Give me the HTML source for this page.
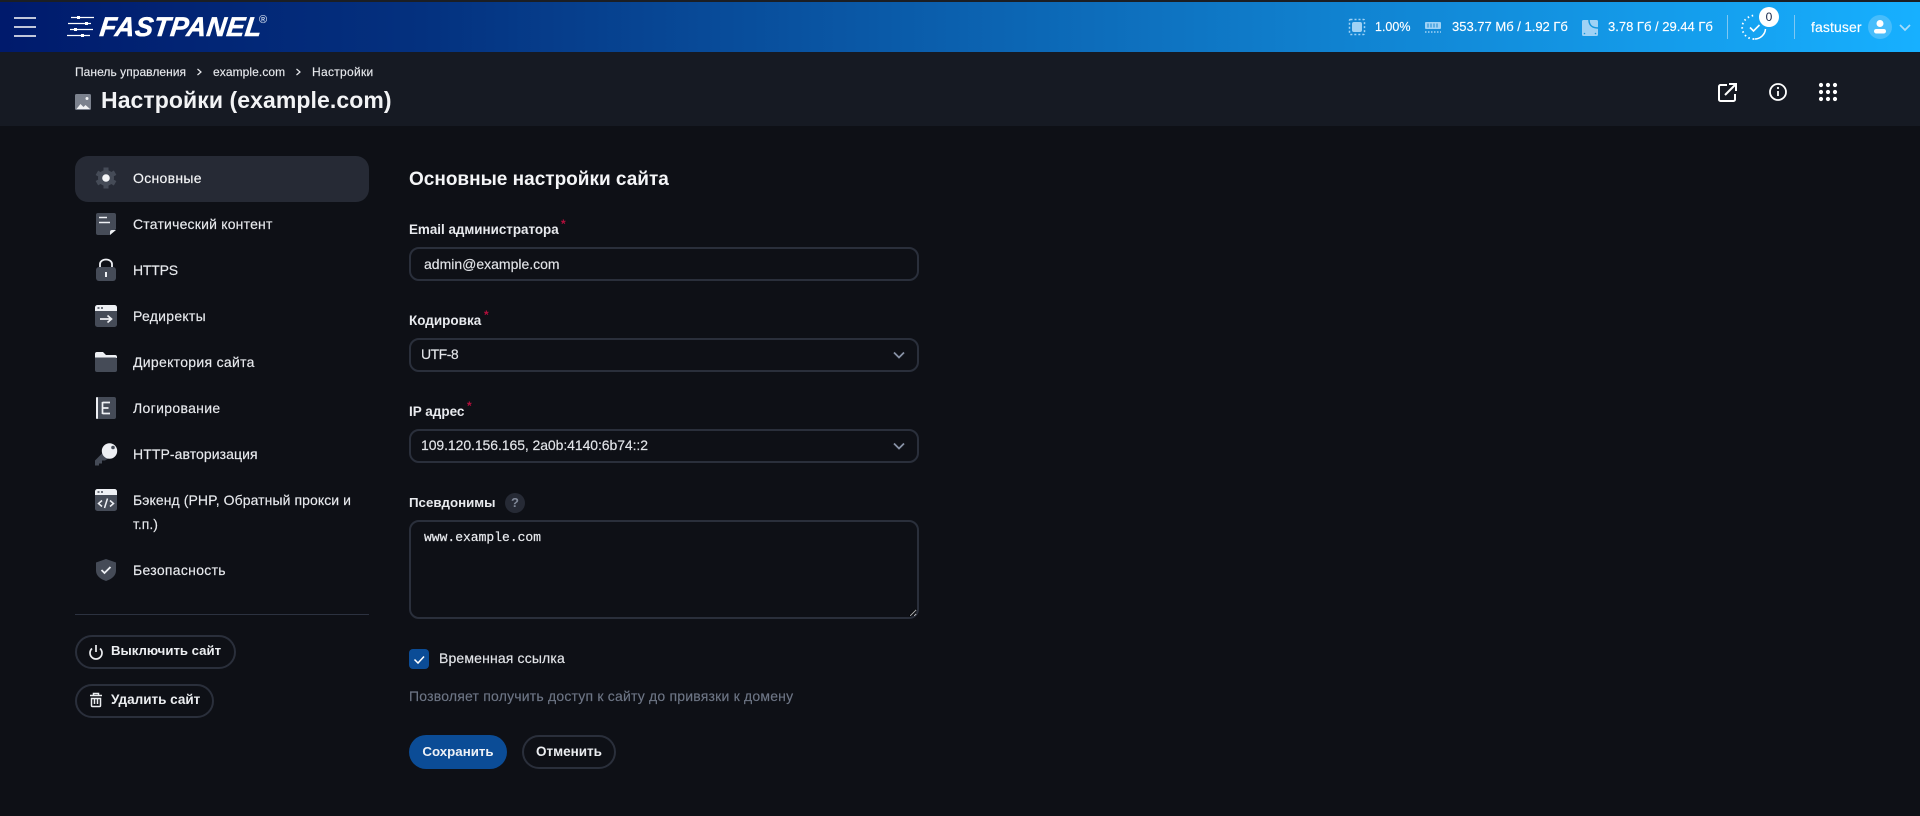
<!DOCTYPE html>
<html lang="ru"><head><meta charset="utf-8"><title>Настройки (example.com)</title>
<style>
html,body{margin:0;padding:0;width:1920px;height:816px;overflow:hidden;background:#0e1016;font-family:"Liberation Sans","Noto Sans CJK SC",sans-serif;color:#e8eaee}
*{box-sizing:border-box}
.a{position:absolute}
.t{position:absolute;white-space:nowrap;line-height:20px;font-size:14px;-webkit-text-stroke:.15px currentColor}
.b{font-weight:700;-webkit-text-stroke:0}
.box{position:absolute;border:2px solid #2a2f3b;border-radius:10px;background:#0e1016}
.pill{position:absolute;border:2px solid #2a2f3b;border-radius:18px;height:34px}
.star{position:absolute;color:#b40f3c;font-size:12px;line-height:12px;font-weight:700}
textarea{position:absolute;left:409px;top:520px;width:510px;height:99px;background:#0e1016;border:2px solid #2a2f3b;border-radius:10px;color:#e8eaee;font:13px/16px "Liberation Mono",monospace;padding:8px 13px;margin:0;outline:none;resize:both;-webkit-text-stroke:.2px currentColor}
</style></head><body>
<div class="a" style="left:0;top:0;width:1920px;height:52px;background:linear-gradient(90deg,#001a6c 0%,#04317f 22%,#1081cf 69%,#17b0ff 100%)"></div>
<div class="a" style="left:0;top:0;width:1920px;height:2px;background:#1b1e24"></div>
<div class="a" style="left:0;top:52px;width:1920px;height:74px;background:#161a23"></div>

<div class="t b" style="left:100px;top:12px;font-size:27px;line-height:30px;font-style:italic;color:#fff;letter-spacing:.4px;transform:skewX(-7deg);-webkit-text-stroke:.5px #fff">FASTPANEL</div>
<div class="t" style="left:259px;top:14px;font-size:11px;line-height:12px;color:#c8d4e8">®</div>

<div class="t" style="left:75px;top:62px;font-size:12px;color:#e6e8ec;letter-spacing:.05px">Панель управления</div>
<div class="t" style="left:213px;top:62px;font-size:12px;color:#e6e8ec;letter-spacing:.08px">example.com</div>
<div class="t" style="left:312px;top:62px;font-size:12px;color:#e6e8ec;letter-spacing:.3px">Настройки</div>
<div class="t b" style="left:101px;top:88px;font-size:23px;line-height:24px;color:#f2f3f5;letter-spacing:.08px">Настройки (example.com)</div>

<div class="t" style="left:1375px;top:17px;font-size:12.500px;color:#fff">1.00%</div>
<div class="t" style="left:1452px;top:17px;font-size:13px;color:#fff">353.77 Мб / 1.92 Гб</div>
<div class="t" style="left:1608px;top:17px;font-size:13px;color:#fff">3.78 Гб / 29.44 Гб</div>
<div class="t" style="left:1811px;top:17px;font-size:14px;color:#fff;letter-spacing:.1px">fastuser</div>

<div class="a" style="left:75px;top:156px;width:294px;height:46px;border-radius:13px;background:#262a35"></div>
<div class="t" style="left:133px;top:168px;color:#f4f5f7;letter-spacing:.3px">Основные</div>
<div class="t" style="left:133px;top:214px;letter-spacing:.2px">Статический контент</div>
<div class="t" style="left:133px;top:260px;letter-spacing:-.2px">HTTPS</div>
<div class="t" style="left:133px;top:306px;letter-spacing:.27px">Редиректы</div>
<div class="t" style="left:133px;top:352px;letter-spacing:.3px">Директория сайта</div>
<div class="t" style="left:133px;top:398px;letter-spacing:.33px">Логирование</div>
<div class="t" style="left:133px;top:444px;letter-spacing:.08px">HTTP-авторизация</div>
<div class="t" style="left:133px;top:490px;letter-spacing:.08px">Бэкенд (PHP, Обратный прокси и</div>
<div class="t" style="left:133px;top:514px">т.п.)</div>
<div class="t" style="left:133px;top:560px;letter-spacing:.3px">Безопасность</div>
<div class="a" style="left:75px;top:614px;width:294px;height:1px;background:#2c3240"></div>

<div class="pill" style="left:75px;top:635px;width:161px"></div>
<div class="t b" style="left:111px;top:641px;font-size:13.200px;color:#eceef1">Выключить сайт</div>
<div class="pill" style="left:75px;top:684px;width:139px"></div>
<div class="t b" style="left:111px;top:690px;font-size:13.500px;color:#eceef1">Удалить сайт</div>

<div class="t b" style="left:409px;top:170px;font-size:19px;color:#f4f5f7">Основные настройки сайта</div>

<div class="t b" style="left:409px;top:220px;font-size:13.400px">Email администратора</div>
<div class="star" style="left:561px;top:218px">*</div>
<div class="box" style="left:409px;top:247px;width:510px;height:34px"></div>
<div class="t" style="left:424px;top:254px;color:#e2e4e8">admin@example.com</div>

<div class="t b" style="left:409px;top:311px;font-size:13.500px">Кодировка</div>
<div class="star" style="left:484px;top:309px">*</div>
<div class="box" style="left:409px;top:338px;width:510px;height:34px"></div>
<div class="t" style="left:421px;top:344px;color:#e2e4e8;letter-spacing:-.5px">UTF-8</div>

<div class="t b" style="left:409px;top:402px;font-size:13.500px">IP адрес</div>
<div class="star" style="left:467px;top:400px">*</div>
<div class="box" style="left:409px;top:429px;width:510px;height:34px"></div>
<div class="t" style="left:421px;top:435px;color:#e2e4e8;letter-spacing:-.08px">109.120.156.165, 2a0b:4140:6b74::2</div>

<div class="t b" style="left:409px;top:493px;font-size:13.300px">Псевдонимы</div>
<div class="a" style="left:505px;top:493px;width:20px;height:20px;border-radius:50%;background:#262a35"></div>
<div class="t b" style="left:505px;top:493px;width:20px;text-align:center;font-size:13px;color:#808898">?</div>
<textarea spellcheck="false">www.example.com</textarea>

<div class="a" style="left:409px;top:649px;width:20px;height:20px;border-radius:4px;background:#0b4c96"></div>
<div class="t" style="left:439px;top:648px;color:#e2e4e8;letter-spacing:.15px">Временная ссылка</div>
<div class="t" style="left:409px;top:686px;color:#6d7585;letter-spacing:.2px">Позволяет получить доступ к сайту до привязки к домену</div>

<div class="a" style="left:409px;top:735px;width:98px;height:34px;border-radius:17px;background:#0b4c96"></div>
<div class="t b" style="left:409px;top:742px;width:98px;text-align:center;font-size:13.300px;color:#eef1f6">Сохранить</div>
<div class="pill" style="left:522px;top:735px;width:94px"></div>
<div class="t b" style="left:522px;top:742px;width:94px;text-align:center;font-size:13.500px;color:#eceef1">Отменить</div>

<svg class="a" style="left:0;top:0" width="1920" height="816" viewBox="0 0 1920 816" fill="none">
<!-- hamburger -->
<path d="M14 18h22M14 27h22M14 36h22" stroke="#fff" stroke-width="1.600"/>
<!-- logo sliders -->
<path d="M71 17.500h23M68 23.500h23M70 29.500h23M67 35.500h23" stroke="#fff" stroke-width="1.300"/>
<path d="M77 16h3v3h-3zM85 22h3v3h-3zM74 28h3v3h-3zM81 34h3v3h-3z" fill="#fff"/>
<!-- breadcrumb chevrons -->
<path d="M197.500 69l3.500 3-3.500 3M296.500 69l3.500 3-3.500 3" stroke="#e6e8ec" stroke-width="1.200"/>
<!-- title image icon -->
<rect x="75" y="94" width="16" height="16" rx="1.500" fill="#7b818d"/>
<path d="M76.500 109l4-5 3 3 2-2 4.500 4z" fill="#f0f1f3"/><circle cx="87" cy="98.500" r="1.500" fill="#f0f1f3"/>
<!-- chip -->
<rect x="1352" y="22" width="10" height="10" rx="2" fill="#9fd2f5"/>
<rect x="1349.500" y="19.500" width="15" height="15" rx="1" stroke="#9fd2f5" stroke-width="1.500" stroke-dasharray="2 2"/>
<!-- ram -->
<rect x="1425" y="22" width="16" height="7" rx="1" fill="#9fd2f5"/>
<path d="M1428 23.500v4M1431 23.500v4M1434 23.500v4M1437 23.500v4" stroke="#1488d4" stroke-width="1"/>
<path d="M1425 32h16" stroke="#9fd2f5" stroke-width="1.400" stroke-dasharray="1.500 1.500"/>
<!-- disk -->
<rect x="1582" y="20" width="16" height="16" rx="1.500" fill="#9fd2f5"/>
<path d="M1589 20c0 5 3 8 9 8" stroke="#1596dd" stroke-width="1.500"/>
<circle cx="1584.500" cy="33.500" r=".8" fill="#1596dd"/><circle cx="1595.500" cy="33.500" r=".8" fill="#1596dd"/>
<!-- dividers -->
<path d="M1727.500 15v24M1794.500 15v24" stroke="#7fc8f3" stroke-width="1"/>
<!-- tasks -->
<path d="M1765.500 29a11 11 0 0 1-11 10" stroke="#fff" stroke-width="1.500"/>
<path d="M1754 39a11.500 11.500 0 0 1-5-22 11 11 0 0 1 5-1.500" stroke="#fff" stroke-width="1.800" stroke-dasharray="1.500 2.800"/>
<path d="M1750 27.500l3.500 3.500 6-6" stroke="#fff" stroke-width="1.600"/>
<circle cx="1769" cy="17" r="10" fill="#fff"/>
<text x="1769" y="21" text-anchor="middle" font-family="Liberation Sans" font-size="12" fill="#16264a">0</text>
<!-- avatar -->
<circle cx="1880" cy="27" r="12" fill="#47bdfb"/>
<circle cx="1880" cy="23.500" r="3.500" fill="#fff"/><rect x="1874" y="29" width="12" height="4.500" rx="2.200" fill="#fff"/>
<path d="M1900 25l5 5 5-5" stroke="#a8dcfa" stroke-width="1.700"/>
<!-- header action icons -->
<path d="M1727 85h-6.500a1.500 1.500 0 0 0-1.500 1.500v13a1.500 1.500 0 0 0 1.500 1.500h13a1.500 1.500 0 0 0 1.500-1.500V94" stroke="#fff" stroke-width="2"/>
<path d="M1725 95l11-11M1729 84h7v7" stroke="#fff" stroke-width="2"/>
<circle cx="1778" cy="92" r="8" stroke="#fff" stroke-width="1.800"/>
<path d="M1778 91v5" stroke="#fff" stroke-width="1.800"/><circle cx="1778" cy="88" r="1.100" fill="#fff"/>
<g fill="#fff"><circle cx="1821" cy="85" r="2.100"/><circle cx="1828" cy="85" r="2.100"/><circle cx="1835" cy="85" r="2.100"/><circle cx="1821" cy="92" r="2.100"/><circle cx="1828" cy="92" r="2.100"/><circle cx="1835" cy="92" r="2.100"/><circle cx="1821" cy="99" r="2.100"/><circle cx="1828" cy="99" r="2.100"/><circle cx="1835" cy="99" r="2.100"/></g>
<!-- gear -->
<circle cx="106" cy="178" r="8" fill="#454b57"/>
<path d="M106 167.500v21M96.900 172.800l18.200 10.500M96.900 183.200l18.200-10.500" stroke="#454b57" stroke-width="5"/>
<circle cx="106" cy="178" r="3.800" fill="#f4f5f7"/>
<!-- doc -->
<path d="M98 213h16a2 2 0 0 1 2 2v14l-6 6H98a2 2 0 0 1-2-2v-18a2 2 0 0 1 2-2z" fill="#454b57"/>
<path d="M99 217.500h8M99 222.500h11" stroke="#eef0f4" stroke-width="1.600"/>
<path d="M116 230l-6 5v-3a2 2 0 0 1 2-2z" fill="#eef0f4"/>
<!-- lock -->
<path d="M100 268v-4a6 4.500 0 0 1 12 0v4" stroke="#eef0f4" stroke-width="1.800"/>
<rect x="96" y="267" width="20" height="14" rx="3" fill="#454b57"/>
<path d="M106 272v5" stroke="#eef0f4" stroke-width="2"/>
<!-- redirect -->
<rect x="95" y="305" width="22" height="22" rx="2.500" fill="#454b57"/>
<path d="M95 311v-3.500a2.500 2.500 0 0 1 2.500-2.500h17a2.500 2.500 0 0 1 2.500 2.500v3.500z" fill="#eef0f4"/>
<path d="M97.500 308h2M101 308h2" stroke="#454b57" stroke-width="1.500"/>
<path d="M100 319h11M107.500 315.500l4 3.500-4 3.500" stroke="#eef0f4" stroke-width="1.700"/>
<!-- folder -->
<path d="M95 358v-4a2 2 0 0 1 2-2h6l3 3h9a2 2 0 0 1 2 2v1z" fill="#eef0f4"/>
<path d="M95 357.500h20a2 2 0 0 1 2 2v10.500a2 2 0 0 1-2 2H97a2 2 0 0 1-2-2z" fill="#454b57"/>
<!-- log -->
<rect x="96" y="397" width="20" height="22" rx="2" fill="#454b57"/>
<rect x="96" y="397" width="2" height="22" rx="1" fill="#eef0f4"/>
<path d="M110 402.500h-7.500M102.500 408h6M102.500 413.500h7.500M102.500 402v12" stroke="#eef0f4" stroke-width="1.700"/>
<!-- key -->
<path d="M95 465.500v-5l9-9 6 6-5 3h-3v3h-3v2z" fill="#454b57"/>
<circle cx="109.500" cy="451" r="7.700" fill="#eef0f4"/>
<circle cx="113" cy="447.500" r="1.800" fill="#454b57"/>
<!-- backend -->
<rect x="95" y="489" width="22" height="22" rx="2.500" fill="#454b57"/>
<path d="M95 495v-3.500a2.500 2.500 0 0 1 2.500-2.500h17a2.500 2.500 0 0 1 2.500 2.500v3.500z" fill="#eef0f4"/>
<path d="M97.500 492h2M101 492h2" stroke="#454b57" stroke-width="1.500"/>
<path d="M102 500.500l-3.500 3 3.500 3M110 500.500l3.500 3-3.500 3M107.500 498.500l-3 9.500" stroke="#eef0f4" stroke-width="1.500"/>
<!-- shield -->
<path d="M106 559l10 3.500v8c0 5-4 8.500-10 10.500-6-2-10-5.500-10-10.500v-8z" fill="#454b57"/>
<path d="M101.500 570l3 3 6-6" stroke="#eef0f4" stroke-width="1.800"/>
<!-- power -->
<path d="M96 645v7M92 648.500a6 6 0 1 0 8 0" stroke="#eceef1" stroke-width="1.700"/>
<!-- trash -->
<path d="M90 695.500h12M93.500 695v-1.500h5v1.500" stroke="#eceef1" stroke-width="1.500"/>
<path d="M91.500 698.500h9v7a1 1 0 0 1-1 1h-7a1 1 0 0 1-1-1zM94.500 699v5M97.500 699v5" stroke="#eceef1" stroke-width="1.500"/>
<!-- select chevrons -->
<path d="M894 352.500l5 5 5-5M894 443.500l5 5 5-5" stroke="#8791a5" stroke-width="1.800"/>
<!-- check -->
<path d="M414.500 659.500l3.500 3.500 6-6.500" stroke="#fff" stroke-width="1.500"/>
</svg>
</body></html>
